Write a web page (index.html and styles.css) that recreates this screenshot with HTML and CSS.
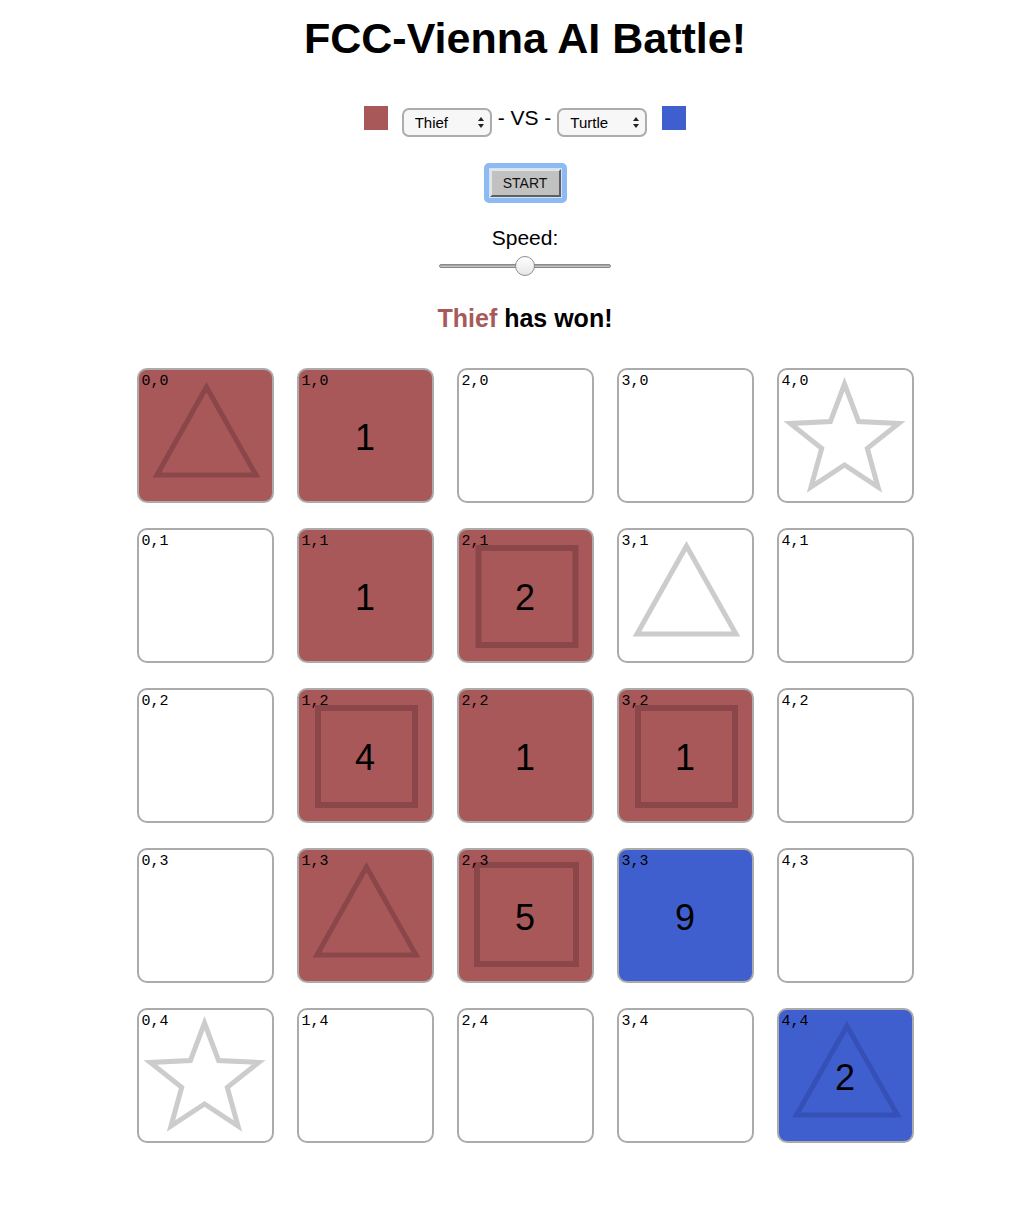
FILE: index.html
```html
<!DOCTYPE html>
<html lang="en">
<head>
<meta charset="utf-8">
<title>FCC-Vienna AI Battle!</title>
<link rel="stylesheet" href="styles.css">
</head>
<body>
<div class="page">
  <h1 class="title">FCC-Vienna AI Battle!</h1>

  <div class="controls">
    <span class="swatch swatch-red"></span>
    <span class="select-wrap select-left"><select class="player"><option>Thief</option></select></span>
    <span class="vs">- VS -</span>
    <span class="select-wrap select-right"><select class="player"><option>Turtle</option></select></span>
    <span class="swatch swatch-blue"></span>
  </div>

  <div class="start-ring"><button class="start">START</button></div>

  <div class="speed-label">Speed:</div>
  <input type="range" class="speed" min="0" max="100" value="50">

  <div class="result"><span class="winner">Thief</span> has won!</div>

  <div class="board">
    <!-- row 0 -->
    <div class="cell red"><svg class="shape" viewBox="0 0 137 135"><polygon class="tri" points="69.5,19 20,107 119,107"/></svg><span class="coord">0,0</span></div>
    <div class="cell red"><span class="coord">1,0</span><span class="num">1</span></div>
    <div class="cell"><span class="coord">2,0</span></div>
    <div class="cell"><span class="coord">3,0</span></div>
    <div class="cell"><svg class="shape" viewBox="0 0 137 135"><polygon class="star" points="67.5,16 81.6,53.6 121.7,55.4 90.3,80.4 101,119.1 67.5,97 34,119.1 44.7,80.4 13.3,55.4 53.4,53.6"/></svg><span class="coord">4,0</span></div>

    <!-- row 1 -->
    <div class="cell"><span class="coord">0,1</span></div>
    <div class="cell red"><span class="coord">1,1</span><span class="num">1</span></div>
    <div class="cell red"><svg class="shape" viewBox="0 0 137 135"><rect class="sq" x="21.5" y="20" width="97" height="97"/></svg><span class="coord">2,1</span><span class="num">2</span></div>
    <div class="cell"><svg class="shape" viewBox="0 0 137 135"><polygon class="tri" points="69.5,18 20,106 119,106"/></svg><span class="coord">3,1</span></div>
    <div class="cell"><span class="coord">4,1</span></div>

    <!-- row 2 -->
    <div class="cell"><span class="coord">0,2</span></div>
    <div class="cell red"><svg class="shape" viewBox="0 0 137 135"><rect class="sq" x="21" y="20" width="97" height="97"/></svg><span class="coord">1,2</span><span class="num">4</span></div>
    <div class="cell red"><span class="coord">2,2</span><span class="num">1</span></div>
    <div class="cell red"><svg class="shape" viewBox="0 0 137 135"><rect class="sq" x="21" y="20" width="97" height="97"/></svg><span class="coord">3,2</span><span class="num">1</span></div>
    <div class="cell"><span class="coord">4,2</span></div>

    <!-- row 3 -->
    <div class="cell"><span class="coord">0,3</span></div>
    <div class="cell red"><svg class="shape" viewBox="0 0 137 135"><polygon class="tri" points="69.5,19 20,107 119,107"/></svg><span class="coord">1,3</span></div>
    <div class="cell red"><svg class="shape" viewBox="0 0 137 135"><rect class="sq" x="20" y="17" width="99" height="99"/></svg><span class="coord">2,3</span><span class="num">5</span></div>
    <div class="cell blue"><span class="coord">3,3</span><span class="num">9</span></div>
    <div class="cell"><span class="coord">4,3</span></div>

    <!-- row 4 -->
    <div class="cell"><svg class="shape" viewBox="0 0 137 135"><polygon class="star" points="67.5,15 81.6,52.6 121.7,54.4 90.3,79.4 101,118.1 67.5,96 34,118.1 44.7,79.4 13.3,54.4 53.4,52.6"/></svg><span class="coord">0,4</span></div>
    <div class="cell"><span class="coord">1,4</span></div>
    <div class="cell"><span class="coord">2,4</span></div>
    <div class="cell"><span class="coord">3,4</span></div>
    <div class="cell blue"><svg class="shape" viewBox="0 0 137 135"><polygon class="tri" points="70,18 19.5,107 120.5,107"/></svg><span class="coord">4,4</span><span class="num">2</span></div>
  </div>
</div>
</body>
</html>
```

FILE: styles.css
```css
html, body {
  margin: 0;
  padding: 0;
  background: #ffffff;
}

body {
  font-family: "Liberation Sans", Arial, sans-serif;
  color: #000;
}

.page {
  margin-left: 38px;
  display: flex;
  flex-direction: column;
  align-items: center;
  padding-bottom: 60px;
}

.title {
  margin: 15px 0 0;
  font-size: 43px;
  line-height: 47px;
  font-weight: bold;
}

/* ---- player selection row ---- */
.controls {
  margin-top: 44px;
  display: flex;
  align-items: flex-start;
  height: 31px;
}

.swatch {
  display: block;
  width: 24px;
  height: 24px;
}

.swatch-red { background: #a85859; margin-right: 14px; }
.swatch-blue { background: #405fcf; margin-left: 15px; }

.select-wrap {
  position: relative;
  display: block;
  margin-top: 2px;
}

.select-wrap::before,
.select-wrap::after {
  content: "";
  position: absolute;
  right: 8px;
  width: 0;
  height: 0;
  border-left: 3.5px solid transparent;
  border-right: 3.5px solid transparent;
  pointer-events: none;
}

.select-wrap::before {
  top: 9px;
  border-bottom: 4px solid #222;
}

.select-wrap::after {
  top: 16px;
  border-top: 4px solid #222;
}

.player {
  -webkit-appearance: none;
  appearance: none;
  display: block;
  width: 90px;
  height: 29px;
  margin: 0;
  padding: 0 0 1px 11px;
  border: 2px solid #acacac;
  border-radius: 7px;
  background: #f7f7f7;
  font-family: "Liberation Sans", Arial, sans-serif;
  font-size: 15px;
  color: #000;
}

.vs {
  display: block;
  margin: 0 6px;
  font-size: 21px;
  line-height: 24px;
}

/* ---- start button ---- */
.start-ring {
  margin-top: 26px;
  padding: 1px;
  border: 5px solid #8dbaf3;
  border-radius: 5px;
  background: #cfe2fb;
  display: flex;
}

.start {
  display: block;
  width: 71px;
  height: 28px;
  margin: 0;
  padding: 0;
  background: #c1c1c1;
  border: 2px solid;
  border-color: #e4e4e4 #5f5f5f #5f5f5f #e4e4e4;
  border-radius: 0;
  font-family: "Liberation Sans", Arial, sans-serif;
  font-size: 14px;
  color: #111;
}

/* ---- speed slider ---- */
.speed-label {
  margin-top: 23px;
  font-size: 21px;
  line-height: 24px;
}

.speed {
  -webkit-appearance: none;
  appearance: none;
  width: 172px;
  height: 21px;
  margin: 5px 0 0;
  padding: 0;
  background: transparent;
}

.speed::-webkit-slider-runnable-track {
  height: 4px;
  border-radius: 3px;
  border: 1px solid #8a8a8a;
  background: linear-gradient(#9a9a9a, #cfcfcf);
}

.speed::-webkit-slider-thumb {
  -webkit-appearance: none;
  appearance: none;
  width: 20px;
  height: 20px;
  margin-top: -9px;
  border-radius: 50%;
  border: 1px solid #8e8e8e;
  background: linear-gradient(#ffffff, #e6e6e6);
  box-sizing: border-box;
}

/* ---- result ---- */
.result {
  margin-top: 28px;
  font-size: 25px;
  line-height: 28px;
  font-weight: bold;
}

.winner {
  color: #a85a5a;
}

/* ---- board ---- */
.board {
  margin-top: 36px;
  display: grid;
  grid-template-columns: repeat(5, 137px);
  grid-auto-rows: 135px;
  column-gap: 23px;
  row-gap: 25px;
}

.cell {
  position: relative;
  box-sizing: border-box;
  border: 2px solid #ababab;
  border-radius: 10px;
  background: #ffffff;
  display: flex;
  align-items: center;
  justify-content: center;
}

.cell.red { background: #a85859; }
.cell.blue { background: #405fcf; }

.shape {
  position: absolute;
  left: -2px;
  top: -2px;
  width: 137px;
  height: 135px;
}

.shape polygon,
.shape rect {
  fill: none;
  stroke: #cccccc;
  stroke-width: 5;
  stroke-linejoin: miter;
}

.shape rect { stroke-width: 6; }

.red .shape polygon,
.red .shape rect { stroke: #8b4649; }

.blue .shape polygon,
.blue .shape rect { stroke: #3550b6; }

.coord {
  position: absolute;
  left: 3px;
  top: 3px;
  font-family: "Liberation Mono", "DejaVu Sans Mono", monospace;
  font-size: 15px;
  line-height: 17px;
  color: #000;
}

.num {
  position: relative;
  top: 2px;
  font-size: 36px;
  line-height: 40px;
  color: #000;
}
```
